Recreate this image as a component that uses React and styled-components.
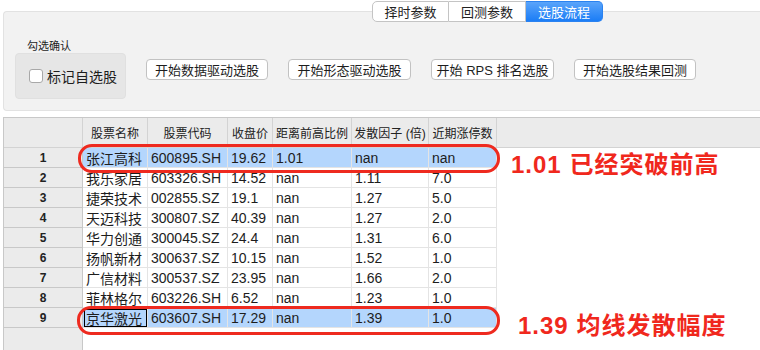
import React from "react";
import styled, { createGlobalStyle, css } from "styled-components";

const GlobalStyle = createGlobalStyle`
  html, body {
    margin: 0;
    padding: 0;
    background: #ffffff;
  }
  body {
    font-family: "Liberation Sans", "Noto Sans CJK SC", sans-serif;
    color: #1d1d1d;
  }
`;

const Page = styled.div`
  position: relative;
  width: 760px;
  height: 350px;
  overflow: hidden;
  display: flex;
  flex-direction: column;
`;

const TabBar = styled.div`
  display: flex;
  padding: 1px 0 0 372px;
  position: relative;
  z-index: 2;
`;

const Tab = styled.div`
  width: 77px;
  height: 21px;
  box-sizing: border-box;
  display: flex;
  align-items: center;
  justify-content: center;
  font-size: 13px;
  background: #ffffff;
  border: 1px solid #c4c4c4;
  border-left: none;
  color: #222;
  &:first-child {
    border-left: 1px solid #c4c4c4;
    border-radius: 5px 0 0 5px;
  }
  &:last-child {
    border-radius: 0 5px 5px 0;
  }
  ${({ active }) =>
    active &&
    css`
      background: linear-gradient(#5aa4fa, #1b7df6);
      border-color: #2b82f0;
      color: #ffffff;
    `}
`;

const Panel = styled.div`
  margin: -11px 0 0 3px;
  height: 100px;
  box-sizing: border-box;
  background: #f2f2f2;
  border: 1px solid #e2e2e2;
  border-right: none;
  border-radius: 4px 0 0 4px;
  display: flex;
  align-items: flex-start;
  padding: 28px 0 0 11px;
`;

const Group = styled.div`
  display: flex;
  flex-direction: column;
`;

const GroupLabel = styled.div`
  font-size: 11px;
  margin-left: 12px;
  height: 13px;
  line-height: 13px;
`;

const GroupBox = styled.div`
  width: 111px;
  height: 46px;
  box-sizing: border-box;
  background: #e6e6e6;
  border: 1px solid #e0e0e0;
  border-radius: 4px;
  display: flex;
  align-items: center;
  padding-left: 13px;
  gap: 4px;
  font-size: 14px;
`;

const CheckBox = styled.span`
  width: 12px;
  height: 12px;
  background: #ffffff;
  border: 1px solid #a8a8a8;
  border-radius: 3px;
`;

const Buttons = styled.div`
  display: flex;
  gap: 20px;
  margin: 19px 0 0 20px;
`;

const Button = styled.div`
  width: ${({ w }) => w}px;
  height: 21px;
  box-sizing: border-box;
  background: #ffffff;
  border: 1px solid #c2c2c2;
  border-radius: 4px;
  font-size: 13px;
  display: flex;
  align-items: center;
  justify-content: center;
  color: #1d1d1d;
`;

const TableArea = styled.div`
  margin: 6px 0 0 3px;
  flex: 1;
  display: flex;
  flex-direction: column;
  border-top: 1px solid #c8c8c8;
  border-left: 1px solid #c8c8c8;
`;

const cols = "79px 65px 80px 45px 79px 77px 68px 1fr";

const Row = styled.div`
  display: grid;
  grid-template-columns: ${cols};
  height: ${({ h }) => h}px;
`;

const HeadCell = styled.div`
  background: #ebebeb;
  border-right: 1px solid #d3d3d3;
  border-bottom: 1px solid #d3d3d3;
  font-size: 12px;
  display: flex;
  align-items: center;
  justify-content: center;
  color: #222;
  &:last-child {
    border-right: none;
  }
`;

const RowNum = styled.div`
  background: #ebebeb;
  border-right: 1px solid #c8c8c8;
  border-bottom: 1px solid #c8c8c8;
  font-size: 12px;
  font-weight: bold;
  display: flex;
  align-items: center;
  justify-content: center;
  color: #222;
`;

const Cell = styled.div`
  box-sizing: border-box;
  border-right: 1px solid #e4e4e4;
  border-bottom: 1px solid #e4e4e4;
  font-size: 14px;
  padding-left: 3px;
  display: flex;
  align-items: center;
  background: ${({ sel }) => (sel ? "#b4d6fd" : "#ffffff")};
  white-space: nowrap;
  overflow: hidden;
  ${({ focus }) =>
    focus &&
    css`
      outline: 1px solid #000;
      outline-offset: -2px;
    `}
`;

const Blank = styled.div`
  background: #ffffff;
`;

const Filler = styled.div`
  flex: 1;
  display: grid;
  grid-template-columns: 79px 1fr;
`;

const FillNum = styled.div`
  background: #ebebeb;
  border-right: 1px solid #c8c8c8;
`;

const Oval = styled.div`
  position: absolute;
  left: ${({ x }) => x}px;
  top: ${({ y }) => y}px;
  width: ${({ w }) => w}px;
  height: ${({ h }) => h}px;
  box-sizing: border-box;
  border: 3px solid #ee2a1f;
  border-radius: 14px;
  pointer-events: none;
`;

const Note = styled.div`
  position: absolute;
  left: ${({ x }) => x}px;
  top: ${({ y }) => y}px;
  font-size: 24px;
  font-weight: bold;
  color: #f0281d;
  letter-spacing: 1px;
  white-space: nowrap;
`;

const headers = ["股票名称", "股票代码", "收盘价", "距离前高比例", "发散因子 (倍)", "近期涨停数"];

const rows = [
  ["张江高科", "600895.SH", "19.62", "1.01", "nan", "nan"],
  ["我乐家居", "603326.SH", "14.52", "nan", "1.11", "7.0"],
  ["捷荣技术", "002855.SZ", "19.1", "nan", "1.27", "5.0"],
  ["天迈科技", "300807.SZ", "40.39", "nan", "1.27", "2.0"],
  ["华力创通", "300045.SZ", "24.4", "nan", "1.31", "6.0"],
  ["扬帆新材", "300637.SZ", "10.15", "nan", "1.52", "1.0"],
  ["广信材料", "300537.SZ", "23.95", "nan", "1.66", "2.0"],
  ["菲林格尔", "603226.SH", "6.52", "nan", "1.23", "1.0"],
  ["京华激光", "603607.SH", "17.29", "nan", "1.39", "1.0"],
];

const selected = [0, 8];

export default function App() {
  return (
    <>
      <GlobalStyle />
      <Page>
        <TabBar>
          <Tab>择时参数</Tab>
          <Tab>回测参数</Tab>
          <Tab active>选股流程</Tab>
        </TabBar>
        <Panel>
          <Group>
            <GroupLabel>勾选确认</GroupLabel>
            <GroupBox>
              <CheckBox />
              标记自选股
            </GroupBox>
          </Group>
          <Buttons>
            <Button w={122}>开始数据驱动选股</Button>
            <Button w={123}>开始形态驱动选股</Button>
            <Button w={123}>开始 RPS 排名选股</Button>
            <Button w={122}>开始选股结果回测</Button>
          </Buttons>
        </Panel>
        <TableArea>
          <Row h={30}>
            <HeadCell />
            {headers.map((h) => (
              <HeadCell key={h}>{h}</HeadCell>
            ))}
            <HeadCell />
          </Row>
          {rows.map((r, i) => {
            const sel = selected.includes(i);
            return (
              <Row h={20} key={i}>
                <RowNum>{i + 1}</RowNum>
                {r.map((v, j) => (
                  <Cell key={j} sel={sel} focus={i === 8 && j === 0}>
                    {v}
                  </Cell>
                ))}
                <Blank />
              </Row>
            );
          })}
          <Filler>
            <FillNum />
            <Blank />
          </Filler>
        </TableArea>
        <Oval x={78} y={144} w={422} h={29} />
        <Oval x={77} y={306} w={423} h={29} />
        <Note x={511} y={145}>1.01 已经突破前高</Note>
        <Note x={518} y={306}>1.39 均线发散幅度</Note>
      </Page>
    </>
  );
}
